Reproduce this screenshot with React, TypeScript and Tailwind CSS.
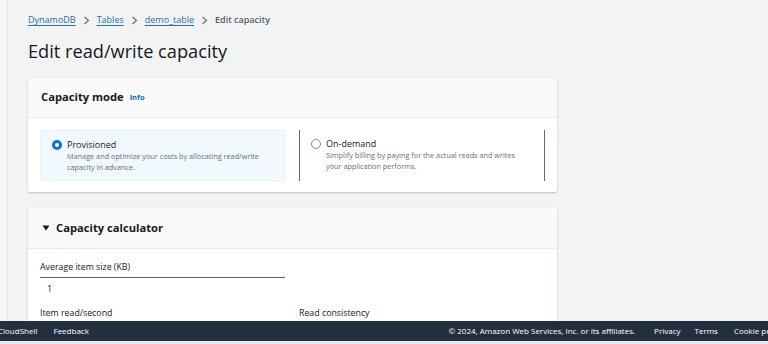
const font = { fontFamily: '"Open Sans", "Noto Sans", Arial, sans-serif' };

const Crumb = ({ label }: { label: string }) => (
  <>
    <a className="text-[#2a6fa8] underline decoration-[#2a6fa8] underline-offset-2">{label}</a>
    <span className="mx-[7px] text-[#687078]">
      <svg width="7" height="9" viewBox="0 0 7 9" className="inline">
        <path d="M1.5 1l4 3.5-4 3.5" fill="none" stroke="#687078" strokeWidth="1.2" />
      </svg>
    </span>
  </>
);

const Radio = ({ checked }: { checked?: boolean }) =>
  checked ? (
    <span className="mt-[2px] h-[10px] w-[10px] shrink-0 rounded-full border-[3px] border-[#0972d3] bg-white" />
  ) : (
    <span className="mt-[2px] h-[10px] w-[10px] shrink-0 rounded-full border border-[#7d8998] bg-white" />
  );

export default function App() {
  return (
    <div style={font} className="flex h-[344px] w-[768px] flex-col overflow-hidden bg-[#f2f3f3] text-[#16191f]">
      <div className="flex flex-1 overflow-hidden">
        <div className="w-[8px] shrink-0 border-r border-[#e4e6e6] bg-[#f5f6f6]" />
        <div className="flex-1 pl-[20px]">
          <div className="mt-[13px] flex h-[13px] items-center text-[9px]">
            <Crumb label="DynamoDB" />
            <Crumb label="Tables" />
            <Crumb label="demo_table" />
            <span className="font-semibold text-[#545b64]">Edit capacity</span>
          </div>
          <h1 className="mt-[12px] text-[18.2px] leading-[26px] text-[#16191f]">Edit read/write capacity</h1>

          <div className="mt-[14px] w-[529px] overflow-hidden rounded-[2px] bg-white shadow-[0_1px_2px_rgba(0,28,36,0.25)]">
            <div className="flex h-[40px] items-center border-b border-[#eaeded] bg-[#fafafa] px-[13px]">
              <span className="text-[11.2px] font-bold">Capacity mode</span>
              <span className="ml-[6px] mt-[1px] text-[7.5px] font-bold text-[#0073bb]">Info</span>
            </div>
            <div className="flex gap-[14px] px-[12px] pb-[11px] pt-[12px]">
              <div className="flex h-[51px] w-[245px] gap-[5px] border border-[#e6f2fa] bg-[#f1f9fe] pl-[11px] pt-[7px]">
                <Radio checked />
                <div>
                  <div className="text-[9px] leading-[13px]">Provisioned</div>
                  <div className="text-[7.3px] leading-[11px] text-[#687078]">
                    Manage and optimize your costs by allocating read/write
                    <br />
                    capacity in advance.
                  </div>
                </div>
              </div>
              <div className="flex h-[51px] w-[246px] gap-[5px] border-x border-x-[#5f6b7a] pl-[11px] pt-[7px]">
                <Radio />
                <div>
                  <div className="text-[9px] leading-[13px]">On-demand</div>
                  <div className="text-[7.3px] leading-[11px] text-[#687078]">
                    Simplify billing by paying for the actual reads and writes
                    <br />
                    your application performs.
                  </div>
                </div>
              </div>
            </div>
          </div>

          <div className="mt-[16px] w-[529px] rounded-[2px] bg-white shadow-[0_1px_2px_rgba(0,28,36,0.25)]">
            <div className="flex h-[41px] items-center border-b border-[#eaeded] bg-[#fafafa] px-[13px]">
              <svg width="8" height="8" viewBox="0 0 8 8" className="mr-[6px] ml-[1px]">
                <path d="M0.5 1.5h7L4 6.5z" fill="#16191f" />
              </svg>
              <span className="text-[11.2px] font-bold">Capacity calculator</span>
            </div>
            <div className="h-[120px] px-[12px] pt-[12px]">
              <div className="w-[245px]">
                <div className="text-[8.8px] leading-[12px]">Average item size (KB)</div>
                <div className="mt-[4px] h-[28px] border-t border-[#545b64] pl-[7px] pt-[4px] text-[9px] leading-[13px]">1</div>
              </div>
              <div className="mt-[2px] flex text-[8.8px] leading-[12px]">
                <div className="w-[259px]">Item read/second</div>
                <div>Read consistency</div>
              </div>
            </div>
          </div>
        </div>
      </div>

      <div className="flex h-[20px] shrink-0 items-center whitespace-nowrap bg-[#232f3e] text-[8px] text-white">
        <span className="-ml-[2px]">CloudShell</span>
        <span className="ml-[16px]">Feedback</span>
        <span className="ml-auto">© 2024, Amazon Web Services, Inc. or its affiliates.</span>
        <span className="ml-[19px]">Privacy</span>
        <span className="ml-[14px]">Terms</span>
        <span className="-mr-[38px] ml-[16px] shrink-0">Cookie preferences</span>
      </div>
      <div className="h-[3px] shrink-0 bg-[#e6e9ee]" />
    </div>
  );
}
